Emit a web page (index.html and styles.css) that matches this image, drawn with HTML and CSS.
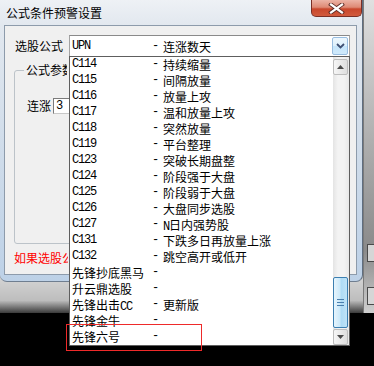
FILE: index.html
```html
<!DOCTYPE html>
<html>
<head>
<meta charset="utf-8">
<title>公式条件预警设置</title>
<link rel="stylesheet" href="styles.css">
</head>
<body>
<div class="screen">
  <div class="bg-top">
    <div class="window">
      <div class="titlebar">
        <span class="title">公式条件预警设置</span>
        <div class="close">
          <svg width="17" height="11" viewBox="0 0 17 11"><path d="M3 1.5 L14 9.5 M14 1.5 L3 9.5" stroke="#5a2a24" stroke-width="4" stroke-linecap="square"/><path d="M3 1.5 L14 9.5 M14 1.5 L3 9.5" stroke="#ffffff" stroke-width="2.2" stroke-linecap="square"/></svg>
        </div>
      </div>
      <div class="client">
        <div class="row-formula">
          <span class="lbl">选股公式</span>
          <div class="combo">
            <span class="code m">UPN</span><span class="dash m">-</span><span class="name">连涨数天</span>
            <div class="combo-btn">
              <svg width="9" height="6" viewBox="0 0 9 6"><path d="M1 1 L4.5 4.5 L8 1" fill="none" stroke="#3e4f73" stroke-width="1.8"/></svg>
            </div>
          </div>
        </div>
        <fieldset class="group">
          <legend><span class="clip legend-clip">公式参数</span></legend>
          <div class="param"><span class="plabel">连涨</span><div class="input m">3</div></div>
        </fieldset>
        <div class="warn"><span class="clip warn-clip">如果选股公式</span></div>
      </div>
    </div>
    <div class="bg-strip">
      <div class="bbox"></div>
      <div class="bbox last"></div>
    </div>
  </div>

  <div class="dropdown">
    <div class="rows">
      <div class="row"><span class="code m">C114</span><span class="dash m">-</span><span>持续缩量</span></div>
      <div class="row"><span class="code m">C115</span><span class="dash m">-</span><span>间隔放量</span></div>
      <div class="row"><span class="code m">C116</span><span class="dash m">-</span><span>放量上攻</span></div>
      <div class="row"><span class="code m">C117</span><span class="dash m">-</span><span>温和放量上攻</span></div>
      <div class="row"><span class="code m">C118</span><span class="dash m">-</span><span>突然放量</span></div>
      <div class="row"><span class="code m">C119</span><span class="dash m">-</span><span>平台整理</span></div>
      <div class="row"><span class="code m">C123</span><span class="dash m">-</span><span>突破长期盘整</span></div>
      <div class="row"><span class="code m">C124</span><span class="dash m">-</span><span>阶段强于大盘</span></div>
      <div class="row"><span class="code m">C125</span><span class="dash m">-</span><span>阶段弱于大盘</span></div>
      <div class="row"><span class="code m">C126</span><span class="dash m">-</span><span>大盘同步选股</span></div>
      <div class="row"><span class="code m">C127</span><span class="dash m">-</span><span><span class="m">N</span>日内强势股</span></div>
      <div class="row"><span class="code m">C131</span><span class="dash m">-</span><span>下跌多日再放量上涨</span></div>
      <div class="row"><span class="code m">C132</span><span class="dash m">-</span><span>跳空高开或低开</span></div>
      <div class="row"><span class="code">先锋抄底黑马</span><span class="dash m">-</span></div>
      <div class="row"><span class="code">升云鼎选股</span><span class="dash m">-</span></div>
      <div class="row"><span class="code">先锋出击<span class="m">CC</span></span><span class="dash m">-</span><span>更新版</span></div>
      <div class="row"><span class="code">先锋金牛</span><span class="dash m">-</span></div>
      <div class="row"><span class="code">先锋六号</span><span class="dash m">-</span></div>
    </div>
    <div class="vscroll">
      <div class="sbtn">
        <svg width="7" height="4" viewBox="0 0 7 4"><path d="M0 4 L3.5 0 L7 4 Z" fill="#4a4a4a"/></svg>
      </div>
      <div class="track">
        <div class="thumb">
          <svg width="7" height="7" viewBox="0 0 7 7"><path d="M0 0.5 H7 M0 3.5 H7 M0 6.5 H7" stroke="#4a7fae" stroke-width="1"/></svg>
        </div>
      </div>
      <div class="sbtn">
        <svg width="7" height="4" viewBox="0 0 7 4"><path d="M0 0 L3.5 4 L7 0 Z" fill="#4a4a4a"/></svg>
      </div>
    </div>
  </div>

  <div class="mark"></div>
</div>
</body>
</html>
```
FILE: styles.css
```css
* { box-sizing: border-box; }
html, body { margin: 0; padding: 0; }
body {
  width: 374px;
  height: 366px;
  overflow: hidden;
  background: #000;
  font-family: "Noto Sans CJK SC", "Noto Sans", sans-serif;
  font-size: 12px;
  color: #000;
}
.screen {
  position: relative;
  width: 374px;
  height: 366px;
  background: #000;
  overflow: hidden;
}
.m {
  font-family: "Liberation Mono", "DejaVu Sans Mono", monospace;
  font-size: 12px;
  letter-spacing: -1.2px;
}
.clip {
  display: inline-block;
  vertical-align: top;
  overflow: hidden;
  white-space: nowrap;
}
.legend-clip { width: 41px; }
.warn-clip { width: 54px; }

/* background behind the dialog */
.bg-top {
  height: 313px;
  display: flex;
  align-items: flex-start;
  background: linear-gradient(#c8c8c8, #d6d6d6 88%, #bdbdbd 96%, #3a3a3a);
}
.bg-strip {
  flex: 1;
  align-self: stretch;
  display: flex;
  flex-direction: column;
  justify-content: flex-end;
  border-left: 1px solid #7a7a7a;
  background: linear-gradient(#e0e0e0, #b4b4b4 40%, #8a8a8a 80%, #cfcfcf);
}
.bbox {
  height: 18px;
  margin: 0 0 25px 3px;
  border: 1px solid #4a4a4a;
  border-right: none;
  background: #d6d6d6;
}
.bbox.last { margin-bottom: 8px; }

/* window frame */
.window {
  width: 363px;
  height: 282px;
  flex: none;
  display: flex;
  flex-direction: column;
  padding: 0 5px 6px 4px;
  background: linear-gradient(#eef1f5, #e2e8ef 25px, #cfdcea 55%, #bdd1e7);
  border-right: 1px solid #5f6e80;
  border-bottom: 1px solid #6f7e90;
  border-radius: 0 0 7px 7px;
}
.titlebar {
  height: 25px;
  flex: none;
  display: flex;
  align-items: flex-start;
}
.title {
  align-self: center;
  padding-left: 2px;
  line-height: 14px;
  color: #000;
}
.close {
  margin-left: auto;
  margin-right: -5px;
  width: 51px;
  height: 17px;
  border: 1px solid #7a2f25;
  border-top: none;
  border-radius: 0 0 5px 5px;
  background: linear-gradient(#ecb4a6, #de8a75 45%, #c9472c 56%, #d15b3d);
  display: flex;
  align-items: center;
  justify-content: center;
}
.close svg { display: block; }

.client {
  flex: 1;
  background: #f0f0f0;
  border: 1px solid #8d9bab;
  padding: 9px 7px 0 9px;
  display: flex;
  flex-direction: column;
  overflow: hidden;
}
.row-formula {
  display: flex;
  align-items: center;
  height: 22px;
  flex: none;
}
.lbl {
  margin-left: 1px;
  width: 54px;
  flex: none;
  line-height: 14px;
}
.combo {
  width: 281px;
  height: 22px;
  flex: none;
  border: 1px solid #a3a3a3;
  border-top-color: #8a8a8a;
  background: #fff;
  display: flex;
  align-items: center;
  padding-left: 2px;
  white-space: nowrap;
}
.combo-btn {
  margin-left: auto;
  margin-right: 1px;
  width: 16px;
  height: 18px;
  border: 1px solid #98bde0;
  border-radius: 2px;
  background: linear-gradient(#eef7fd, #dcf0fc 50%, #c5e5fb 51%, #cfe9fb);
  display: flex;
  align-items: center;
  justify-content: center;
}
.combo-btn svg { display: block; }

.group {
  margin: 6px 0 0 0;
  padding: 0 9px;
  border: 1px solid #bcc3c9;
  border-radius: 3px;
  height: 181px;
  flex: none;
  min-width: 0;
}
.group legend {
  padding: 0 2px;
  line-height: 14px;
  font-size: 12px;
}
.param {
  display: flex;
  align-items: center;
  margin-top: 21px;
  margin-left: 3px;
}
.plabel { line-height: 16px; }
.input {
  margin-left: 2px;
  width: 40px;
  height: 16px;
  border: 1px solid;
  border-color: #7b7b7b #c8c8c8 #c8c8c8 #7b7b7b;
  background: #fff;
  padding-left: 2px;
  line-height: 14px;
}
.warn {
  color: #f00;
  margin-top: 7px;
  line-height: 14px;
  white-space: nowrap;
}

/* dropped-down list (popup over the dialog) */
.dropdown {
  position: absolute;
  left: 69px;
  top: 56px;
  width: 281px;
  height: 290px;
  border: 1px solid #5e5e5e;
  background: #fff;
  display: flex;
}
.rows { flex: 1; min-width: 0; }
.row {
  display: flex;
  height: 16px;
  line-height: 15px;
  padding-left: 2px;
  white-space: nowrap;
}
.code { width: 80px; flex: none; }
.dash { width: 11px; flex: none; }

.vscroll {
  width: 16px;
  flex: none;
  display: flex;
  flex-direction: column;
  padding: 2px 1px 0 0;
  background: linear-gradient(to right, #e4e4e4, #f3f3f3 30%, #f3f3f3 70%, #e8e8e8);
}
.sbtn {
  height: 16px;
  flex: none;
  border: 1px solid #bdbdbd;
  border-radius: 2px;
  background: linear-gradient(to right, #f6f6f6, #eaeaea 50%, #dedede);
  display: flex;
  align-items: center;
  justify-content: center;
}
.sbtn svg, .thumb svg { display: block; }
.track {
  flex: 1;
  display: flex;
  flex-direction: column;
  justify-content: flex-end;
  padding-bottom: 1px;
}
.thumb {
  height: 51px;
  border: 1px solid #3c7fb1;
  border-radius: 2px;
  background: linear-gradient(to right, #e7f5fd, #cbe9fa 45%, #aedbf5 55%, #bfe3f8);
  display: flex;
  align-items: center;
  justify-content: center;
}

/* red annotation frame */
.mark {
  position: absolute;
  left: 66px;
  top: 324px;
  width: 136px;
  height: 27px;
  border: 1px solid #ee2a2a;
}
```
